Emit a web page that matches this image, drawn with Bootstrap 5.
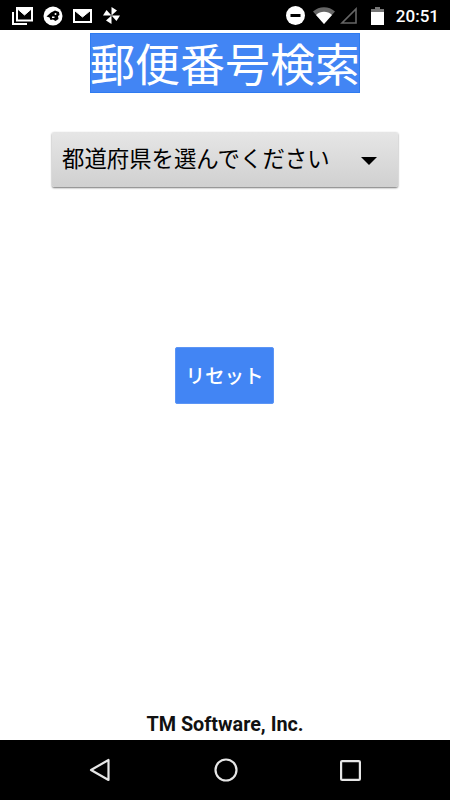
<!DOCTYPE html>
<html lang="ja">
<head>
<meta charset="utf-8">
<title>郵便番号検索</title>
<link href="https://cdn.jsdelivr.net/npm/bootstrap@5.3.0/dist/css/bootstrap.min.css" rel="stylesheet">
<style>
html,body{height:800px;width:450px;margin:0;overflow:hidden;background:#fff;font-family:"Roboto","Noto Sans CJK JP",sans-serif}
.statusbar{height:30px;background:#000;color:#fff;padding:1px 0 0 12px}
.sb-left{gap:10px}
.clock{font-size:17px;font-weight:500;color:#fff;margin:0 11px 0 12px;line-height:28px}
.screen{height:710px}
.title-box{background:#4285f4;box-shadow:inset 0 0 0 1px #2f7bf0;color:#fff;width:270px;height:60px;font-size:45px;line-height:59px;margin-top:3px;font-weight:400;white-space:nowrap;font-family:"Noto Sans CJK JP",sans-serif}
.pref-btn{width:346px;height:55px;margin-top:39px;background:linear-gradient(#e6e6e6,#d0d0d0);border:0;border-radius:2px;box-shadow:0 1px 2px rgba(0,0,0,.55);color:#000;font-size:22.4px;padding:0 21px 3px 10px;font-family:"Noto Sans CJK JP",sans-serif}
.caret-shape{width:0;height:0;border-left:8px solid transparent;border-right:8px solid transparent;border-top:8px solid #000;margin-top:5px}
.reset-btn{width:99px;height:57px;margin-top:160px;margin-right:1px;background:#4285f4;border:1px solid #5c95f5;border-radius:2px;color:#fff;font-size:19.5px;padding:0 0 2px;font-weight:500;font-family:"Noto Sans CJK JP",sans-serif}
.reset-btn:hover{background:#4285f4;color:#fff}
.vendor{font-size:19.800px;font-weight:700;color:#111;line-height:21px;padding-bottom:5px}
.navbar-bottom{height:60px;background:#000;padding:0 89px}
</style>
</head>
<body class="d-flex flex-column">
<div class="statusbar d-flex align-items-center justify-content-between">
  <div class="sb-left d-flex align-items-center">
    <svg width="21" height="18" viewBox="0 0 21 18" fill="none" aria-hidden="true"><path d="M1 5v12h14" stroke="#fff" stroke-width="2"/><rect x="5" y="1" width="15" height="12.500" stroke="#fff" stroke-width="2"/><path d="M5 1.500 12.500 8 20 1.500z" fill="#fff" stroke="#fff"/></svg>
    <svg width="20" height="20" viewBox="0 0 20 20" aria-hidden="true"><circle cx="10" cy="10" r="9.500" fill="#fff"/><path d="M3.500 10.500 8 6.500l4-2 4 1.500.5 3-1.500 1 .5 3-3 2-2.500-1.500-2.500.5-1-2.500z" fill="#000"/><circle cx="12.500" cy="8" r="1" fill="#fff"/><path d="M9 10.500h2.500v1.500H9z" fill="#fff"/></svg>
    <svg width="19" height="14" viewBox="0 0 19 14" fill="none" aria-hidden="true"><rect x="1" y="1" width="17" height="12" stroke="#fff" stroke-width="2"/><path d="M1.500 1.500 9.500 8l8-6.500z" fill="#fff" stroke="#fff"/></svg>
    <svg width="19" height="19" viewBox="0 0 19 19" fill="#fff" aria-hidden="true"><path d="M9.500 9.500V1L15 4.500z"/><path d="M9.500 9.500H18l-3.500 5.500z"/><path d="M9.500 9.500V18L4 14.500z"/><path d="M9.500 9.500H1L4.500 4z"/></svg>
  </div>
  <div class="d-flex align-items-center">
    <svg width="19" height="19" viewBox="0 0 19 19" aria-hidden="true"><circle cx="9.500" cy="9.500" r="9.500" fill="#fff"/><rect x="4.500" y="8" width="10" height="3" fill="#000"/></svg>
    <svg class="ms-2" width="22" height="17" viewBox="0 0 22 17" aria-hidden="true"><path d="M0 4.500C6 -1.300 16 -1.300 22 4.500L11 17z" fill="#fff" opacity=".4"/><path d="M3 8C7.500 3.800 14.500 3.800 19 8L11 17z" fill="#fff"/></svg>
    <svg style="margin-left:5px" width="17" height="17" viewBox="0 0 17 17" fill="none" aria-hidden="true"><path d="M16 2V16H2z" stroke="#666" stroke-width="1.600"/></svg>
    <svg style="margin-left:14px" width="13" height="18" viewBox="0 0 13 18" aria-hidden="true"><path d="M4 0h5v2h4v16H0V2h4z" fill="#fff"/><path d="M4 0h5v2h4v3H0V2h4z" fill="#777"/></svg>
    <span class="clock">20:51</span>
  </div>
</div>
<main class="screen d-flex flex-column align-items-center">
  <h1 class="title-box text-center mb-0">郵便番号検索</h1>
  <button type="button" class="btn pref-btn d-flex align-items-center justify-content-between"><span>都道府県を選んでください</span><span class="caret-shape"></span></button>
  <button type="button" class="btn reset-btn">リセット</button>
  <div class="vendor mt-auto">TM Software, Inc.</div>
</main>
<nav class="navbar-bottom d-flex align-items-center justify-content-between">
  <svg width="22" height="24" viewBox="0 0 22 24" fill="none" aria-hidden="true"><path d="M19.500 2v20L2 12z" stroke="#e6e6e6" stroke-width="2.200" stroke-linejoin="round"/></svg>
  <svg width="24" height="24" viewBox="0 0 24 24" fill="none" aria-hidden="true"><circle cx="12" cy="12" r="10.500" stroke="#e6e6e6" stroke-width="2.200"/></svg>
  <svg width="21" height="21" viewBox="0 0 21 21" fill="none" aria-hidden="true"><rect x="1.100" y="1.100" width="18.800" height="18.800" rx="1" stroke="#e6e6e6" stroke-width="2.200"/></svg>
</nav>
</body>
</html>
